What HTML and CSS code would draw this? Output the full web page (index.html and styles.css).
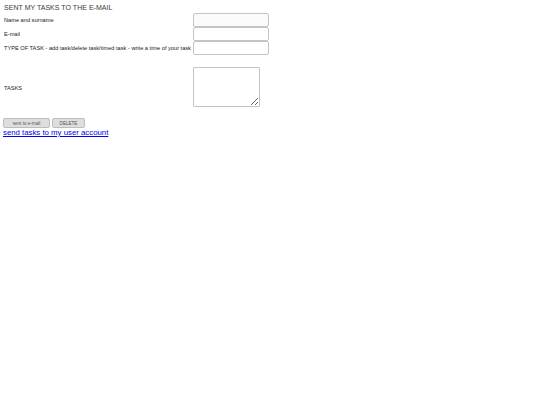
FILE: index.html
```html
<!DOCTYPE html>
<html>
<head>
<meta charset="utf-8">
<link rel="stylesheet" href="styles.css">
</head>
<body>
<div class="page">
  <h1 class="title">SENT MY TASKS TO THE E-MAIL</h1>
  <form class="form">
    <div class="grid">
      <label class="label">Name and surname</label>
      <input class="field" type="text">
      <label class="label">E-mail</label>
      <input class="field" type="text">
      <label class="label">TYPE OF TASK - add task/delete task/timed task - write a time of your task</label>
      <input class="field" type="text">
      <label class="label label-tasks">TASKS</label>
      <textarea class="area"></textarea>
    </div>
    <div class="buttons">
      <button type="button" class="btn btn-send">sent to e-mail</button>
      <button type="button" class="btn btn-del">DELETE</button>
    </div>
  </form>
  <a class="link" href="#">send tasks to my user account</a>
</div>
</body>
</html>
```

FILE: styles.css
```css
html, body {
  margin: 0;
  padding: 0;
  background: #ffffff;
}
.page {
  padding: 4px 3px;
  font-family: "Liberation Sans", Arial, sans-serif;
  color: #111;
}
.title {
  margin: 0 0 0 1px;
  font-size: 7px;
  font-weight: normal;
  line-height: 8px;
  letter-spacing: 0.03px;
  color: #3a3a3a;
}
.form {
  margin: 1px 0 0 0;
}
.grid {
  display: grid;
  grid-template-columns: 189px auto;
  row-gap: 0;
  align-items: center;
  justify-items: start;
  margin-left: 1px;
}
.label {
  font-size: 5.65px;
  line-height: 7px;
  padding-top: 1px;
  white-space: nowrap;
  color: #1a1a1a;
}
.label-tasks {
  padding-top: 3px;
}
.field {
  box-sizing: border-box;
  width: 76px;
  height: 14px;
  margin: 0;
  padding: 0;
  border: 1px solid #c4c4c4;
  border-radius: 2px;
  background: #fff;
}
.field:first-of-type {
  background: #fafafa;
}
.area {
  box-sizing: border-box;
  width: 67px;
  height: 40px;
  margin: 12px 0 11px 0;
  padding: 0;
  border: 1px solid #c4c4c4;
  border-radius: 1px;
  background: #fff;
  font-size: 6px;
}
.buttons {
  display: flex;
  gap: 2px;
}
.btn {
  box-sizing: border-box;
  height: 10px;
  padding: 0;
  font-family: "Liberation Sans", Arial, sans-serif;
  font-size: 4.6px;
  color: #555;
  background: #dedede;
  border: 1px solid #bdbdbd;
  border-radius: 2px;
}
.btn-send {
  width: 47px;
}
.btn-del {
  width: 33px;
}
.link {
  display: block;
  font-size: 7.8px;
  line-height: 9px;
  color: #0000ee;
  text-decoration: underline;
}
```
